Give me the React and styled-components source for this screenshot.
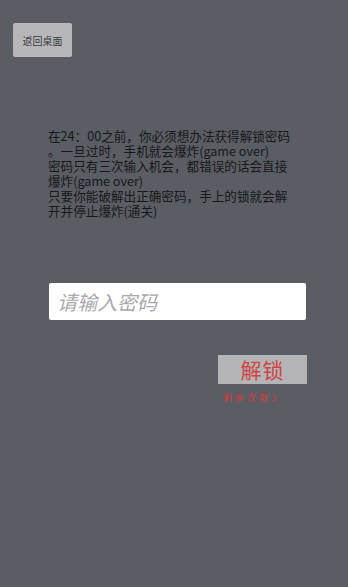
import React from 'react';
import styled, { createGlobalStyle } from 'styled-components';

const GlobalStyle = createGlobalStyle`
  html, body {
    margin: 0;
    padding: 0;
    background: #5a5d63;
  }
  body {
    font-family: "Noto Sans CJK SC", "Liberation Sans", sans-serif;
  }
`;

const Screen = styled.div`
  width: 348px;
  height: 587px;
  background: #5a5d63;
  display: flex;
  flex-direction: column;
  box-sizing: border-box;
  padding: 23px 0 0 13px;
`;

const BackButton = styled.button`
  width: 59px;
  height: 34px;
  padding: 0;
  border: none;
  border-radius: 2px;
  background: #b7b7ba;
  color: #3a3a3e;
  font-family: inherit;
  font-size: 10px;
  cursor: pointer;
`;

const Story = styled.div`
  margin: 71px 0 0 35px;
  width: 262px;
  color: #17181b;
  font-size: 12.6px;
  line-height: 15px;
  white-space: nowrap;
`;

const Line = styled.div`
  height: 15px;
`;

const PasswordInput = styled.input`
  margin: 65px 0 0 36px;
  width: 257px;
  height: 37px;
  box-sizing: border-box;
  border: none;
  border-radius: 2px;
  background: #ffffff;
  padding: 0 8px;
  font-family: inherit;
  font-size: 20px;
  outline: none;

  &::placeholder {
    color: #a9a9ad;
    font-style: italic;
  }
`;

const UnlockArea = styled.div`
  margin: 35px 0 0 205px;
  display: flex;
  flex-direction: column;
  align-items: flex-start;
`;

const UnlockButton = styled.button`
  width: 89px;
  height: 29px;
  padding: 0;
  border: none;
  background: #b5b5b8;
  color: #cf4444;
  font-family: inherit;
  font-size: 21px;
  line-height: 29px;
  letter-spacing: 1px;
  cursor: pointer;
`;

const Remaining = styled.div`
  margin: 7px 0 0 5px;
  color: #d33a3a;
  font-size: 9px;
  letter-spacing: 3px;
`;

const storyLines = [
  '在24：00之前，你必须想办法获得解锁密码',
  '。一旦过时，手机就会爆炸(game over)',
  '密码只有三次输入机会，都错误的话会直接',
  '爆炸(game over)',
  '只要你能破解出正确密码，手上的锁就会解',
  '开并停止爆炸(通关)',
];

export default function App() {
  const [remaining] = React.useState(3);
  return (
    <>
      <GlobalStyle />
      <Screen>
        <div>
          <BackButton>返回桌面</BackButton>
        </div>
        <Story>
          {storyLines.map((line) => (
            <Line key={line}>{line}</Line>
          ))}
        </Story>
        <PasswordInput placeholder="请输入密码" />
        <UnlockArea>
          <UnlockButton>解锁</UnlockButton>
          <Remaining>剩余次数{remaining}</Remaining>
        </UnlockArea>
      </Screen>
    </>
  );
}
